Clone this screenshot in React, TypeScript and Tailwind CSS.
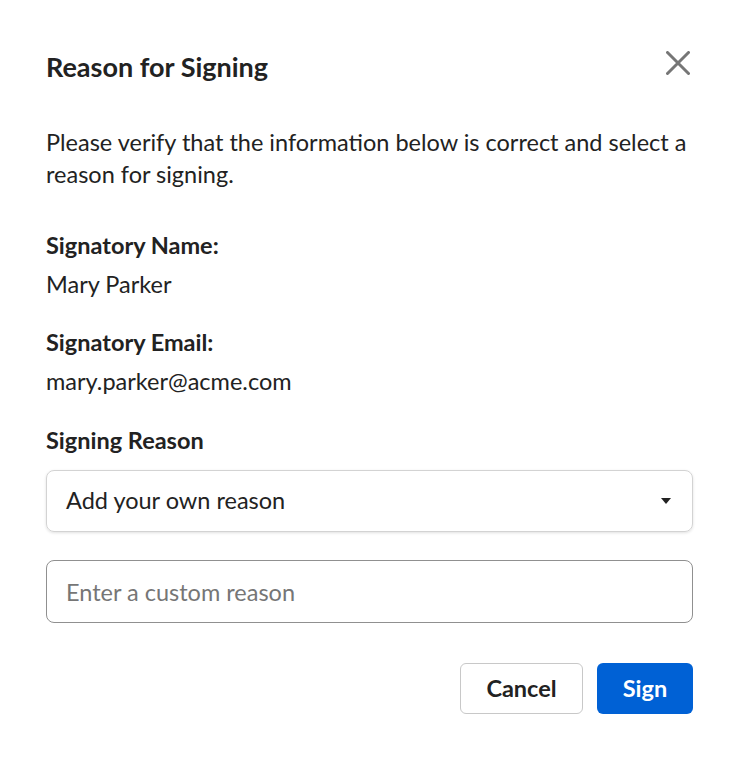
import { useState } from "react";

export default function App() {
  const [reason, setReason] = useState("");

  return (
    <div className="min-h-screen bg-white font-['Lato',sans-serif] text-[#222]">
      <div className="px-[46px] pt-[52px]">
        <div className="flex items-start justify-between">
          <h1 className="-mt-[1px] mb-[1px] text-[27px] font-bold leading-8">Reason for Signing</h1>
          <button className="-mr-[1px] -mt-[5px] flex h-8 w-8 items-center justify-center text-[#767676]" aria-label="Close">
            <svg width="24" height="24" viewBox="0 0 24 24" fill="none">
              <path d="M1.5 1.5L22.5 22.5M22.5 1.5L1.5 22.5" stroke="currentColor" strokeWidth="3" strokeLinecap="round" />
            </svg>
          </button>
        </div>

        <p className="mt-[42px] text-[23.5px] leading-8">
          Please verify that the information below is correct and select a reason for signing.
        </p>

        <div className="mt-[39px] grid gap-[7px]">
          <span className="text-[23.5px] font-bold leading-8">Signatory Name:</span>
          <span className="text-[23.5px] leading-8">Mary Parker</span>
        </div>

        <div className="mt-[26px] grid gap-[7px]">
          <span className="text-[23.5px] font-bold leading-8">Signatory Email:</span>
          <span className="text-[23.5px] leading-8">mary.parker@acme.com</span>
        </div>

        <div className="mt-[27px] text-[23.5px] font-bold leading-8">Signing Reason</div>

        <button className="mt-[14px] flex h-[62px] w-full items-center justify-between rounded-lg border border-[#d3d3d3] pl-[19px] pr-[21px] text-left text-[23.5px] shadow-[0_1px_3px_rgba(0,0,0,0.12)]">
          <span>Add your own reason</span>
          <svg width="10" height="6" viewBox="0 0 10 6">
            <path d="M0 0H10L5 6Z" fill="#222" />
          </svg>
        </button>

        <input
          value={reason}
          onChange={(event) => setReason(event.target.value)}
          placeholder="Enter a custom reason"
          className="mt-[28px] h-[63px] w-full rounded-lg border border-[#909090] px-[19px] text-[23.5px] outline-none placeholder:text-[#767676]"
        />

        <div className="mt-[40px] flex justify-end gap-[14px]">
          <button className="h-[51px] w-[123px] rounded-md border border-[#c8c8c8] bg-white text-[23.5px] font-bold">
            Cancel
          </button>
          <button className="h-[51px] w-[96px] rounded-md bg-[#0061d5] text-[23.5px] font-bold text-white">Sign</button>
        </div>
      </div>
    </div>
  );
}
